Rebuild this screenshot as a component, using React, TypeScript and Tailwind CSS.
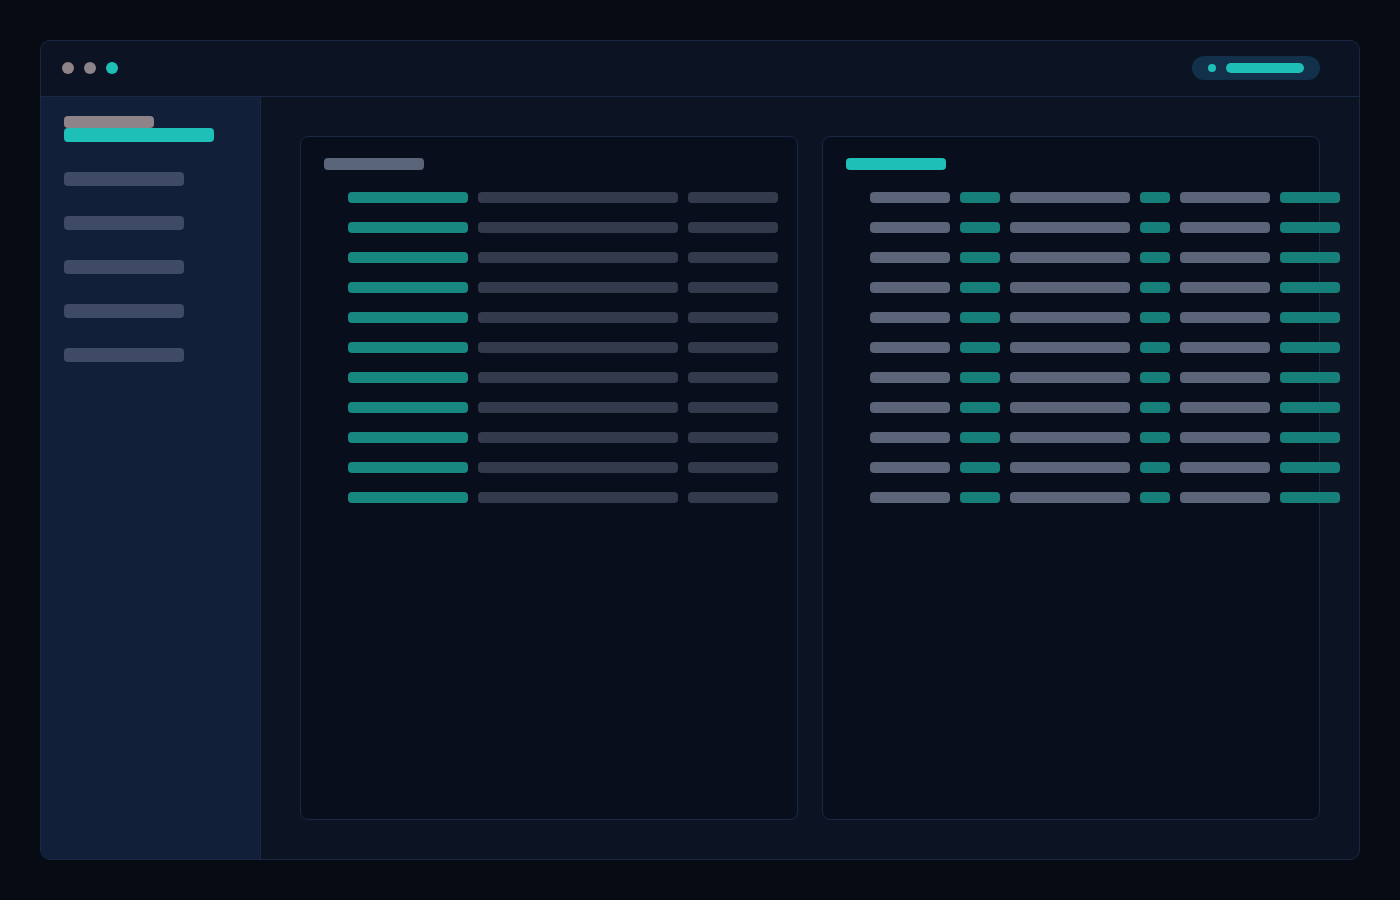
const navItems = ["overview", "reports", "members", "billing", "settings"];

const leftRows = Array.from({ length: 11 }, (_, i) => i);
const rightRows = Array.from({ length: 11 }, (_, i) => i);

function Bar({ className }: { className: string }) {
  return <div className={`shrink-0 rounded-[4px] ${className}`} />;
}

export default function App() {
  return (
    <div className="min-h-screen w-full bg-[#070b14] p-10 font-['Liberation_Sans',sans-serif]">
      <div className="flex h-[820px] flex-col overflow-hidden rounded-[10px] border border-[#1a2846] bg-[#0c1322]">
        {/* Title bar */}
        <header className="flex h-[56px] shrink-0 items-center justify-between border-b border-[#1a2846] pb-px pl-[21px] pr-[39px]">
          <div className="flex items-center gap-[10px]">
            <span className="h-3 w-3 rounded-full bg-[#8e8389]" />
            <span className="h-3 w-3 rounded-full bg-[#8e8389]" />
            <span className="h-3 w-3 rounded-full bg-[#1ebfb7]" />
          </div>
          <div className="flex h-6 w-32 items-center gap-[10px] rounded-full bg-[#13304a] pl-4">
            <span className="h-2 w-2 rounded-full bg-[#1ebfb7]" />
            <span className="h-[10px] w-[78px] rounded-full bg-[#1ebfb7]" />
          </div>
        </header>

        <div className="flex min-h-0 flex-1">
          {/* Sidebar */}
          <aside className="w-[220px] shrink-0 border-r border-[#1a2846] bg-[#111f38] pl-[23px] pt-[19px]">
            <div className="h-3 w-[90px] rounded-[4px] bg-[#8e8389]" />
            <div className="h-[14px] w-[150px] rounded-[4px] bg-[#1ebfb7]" />
            <nav className="mt-[30px] flex flex-col gap-[30px]">
              {navItems.map((item) => (
                <div key={item} className="h-[14px] w-[120px] rounded-[4px] bg-[#3e4a66]" />
              ))}
            </nav>
          </aside>

          {/* Main */}
          <main className="grid min-w-0 flex-1 grid-cols-2 gap-6 p-[39px]">
            <section className="rounded-[8px] border border-[#1a2846] bg-[#080e1c] pl-[23px] pt-[21px]">
              <div className="h-3 w-[100px] rounded-[4px] bg-[#5a657a]" />
              <div className="mt-[22px] flex flex-col gap-[19px] pl-6">
                {leftRows.map((r) => (
                  <div key={r} className="flex gap-[10px]">
                    <Bar className="h-[11px] w-[120px] bg-[#17877f]" />
                    <Bar className="h-[11px] w-[200px] bg-[#323a4c]" />
                    <Bar className="h-[11px] w-[90px] bg-[#323a4c]" />
                  </div>
                ))}
              </div>
            </section>

            <section className="rounded-[8px] border border-[#1a2846] bg-[#080e1c] pl-[23px] pt-[21px]">
              <div className="h-3 w-[100px] rounded-[4px] bg-[#1ebfb7]" />
              <div className="mt-[22px] flex flex-col gap-[19px] pl-6">
                {rightRows.map((r) => (
                  <div key={r} className="flex gap-[10px]">
                    <Bar className="h-[11px] w-[80px] bg-[#5b6479]" />
                    <Bar className="h-[11px] w-[40px] bg-[#177f7a]" />
                    <Bar className="h-[11px] w-[120px] bg-[#5b6479]" />
                    <Bar className="h-[11px] w-[30px] bg-[#177f7a]" />
                    <Bar className="h-[11px] w-[90px] bg-[#5b6479]" />
                    <Bar className="h-[11px] w-[60px] bg-[#177f7a]" />
                  </div>
                ))}
              </div>
            </section>
          </main>
        </div>
      </div>
    </div>
  );
}
